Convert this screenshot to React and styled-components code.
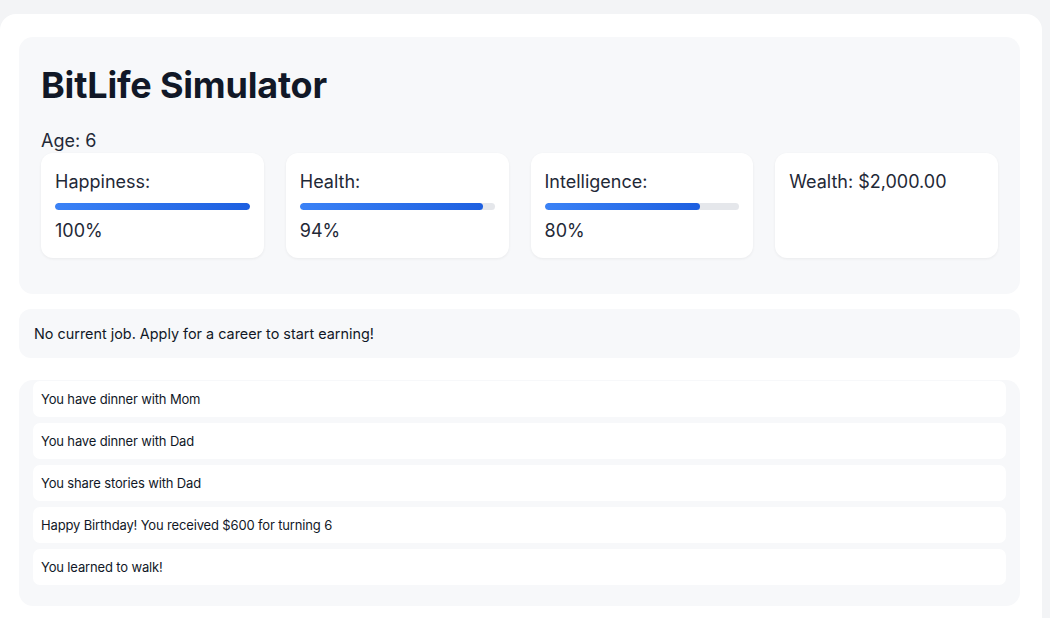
import styled, { createGlobalStyle } from "styled-components";

const Global = createGlobalStyle`
  html, body {
    margin: 0;
    background: #f3f4f6;
    font-family: Inter, "Noto Sans", sans-serif;
    overflow: hidden;
  }
`;

const Page = styled.div`
  margin: 14px 8px 0 0;
  background: #ffffff;
  border-radius: 16px;
  padding: 23px 22px 20px 19px;
  height: 640px;
  box-sizing: border-box;
  display: flex;
  flex-direction: column;
  gap: 15px;
`;

const Header = styled.section`
  background: #f7f8fa;
  border-radius: 14px;
  padding: 24px 22px 36px 22px;
`;

const Title = styled.h1`
  margin: 0;
  font-size: 36px;
  line-height: 48px;
  font-weight: 700;
  color: #111827;
  letter-spacing: -0.2px;
`;

const Age = styled.div`
  margin-top: 21px;
  font-size: 18px;
  line-height: 22px;
  color: #1f2937;
`;

const Stats = styled.div`
  display: grid;
  grid-template-columns: repeat(4, 1fr);
  gap: 22px;
  margin-top: 1px;
`;

const Card = styled.div`
  background: #ffffff;
  border-radius: 12px;
  height: 105px;
  box-sizing: border-box;
  padding: 18px 14px;
  box-shadow: 0 1px 3px rgba(0, 0, 0, 0.06);
  color: #1f2937;
`;

const Label = styled.div`
  font-size: 18px;
  line-height: 22px;
`;

const Track = styled.div`
  margin-top: 10px;
  height: 7px;
  border-radius: 4px;
  background: #e5e7eb;
  overflow: hidden;
`;

const Fill = styled.div`
  height: 100%;
  border-radius: 4px;
  background: linear-gradient(90deg, #3b82f6, #1d5fe0);
`;

const Value = styled.div`
  margin-top: 10px;
  font-size: 18px;
  line-height: 22px;
`;

const Job = styled.div`
  background: #f7f8fa;
  border-radius: 12px;
  padding: 14px 15px;
  font-size: 14.4px;
  line-height: 21px;
  color: #111827;
`;

const Log = styled.div`
  margin-top: 7px;
  background: #f7f8fa;
  border-radius: 14px;
  padding: 1px 14px 21px 14px;
  display: flex;
  flex-direction: column;
  gap: 6px;
`;

const Entry = styled.div`
  background: #ffffff;
  border-radius: 7px;
  height: 36px;
  display: flex;
  align-items: center;
  padding: 0 8px 1px 8px;
  box-sizing: border-box;
  font-size: 13px;
  letter-spacing: -0.15px;
  color: #111827;
`;

const stats = [
  { label: "Happiness:", value: 100 },
  { label: "Health:", value: 94 },
  { label: "Intelligence:", value: 80 },
];

const events = [
  "You have dinner with Mom",
  "You have dinner with Dad",
  "You share stories with Dad",
  "Happy Birthday! You received $600 for turning 6",
  "You learned to walk!",
];

export default function App() {
  return (
    <>
      <Global />
      <Page>
        <Header>
          <Title>BitLife Simulator</Title>
          <Age>Age: 6</Age>
          <Stats>
            {stats.map((s) => (
              <Card key={s.label}>
                <Label>{s.label}</Label>
                <Track>
                  <Fill style={{ width: `${s.value}%` }} />
                </Track>
                <Value>{s.value}%</Value>
              </Card>
            ))}
            <Card>
              <Label>Wealth: $2,000.00</Label>
            </Card>
          </Stats>
        </Header>
        <Job>No current job. Apply for a career to start earning!</Job>
        <Log>
          {events.map((e) => (
            <Entry key={e}>{e}</Entry>
          ))}
        </Log>
      </Page>
    </>
  );
}
